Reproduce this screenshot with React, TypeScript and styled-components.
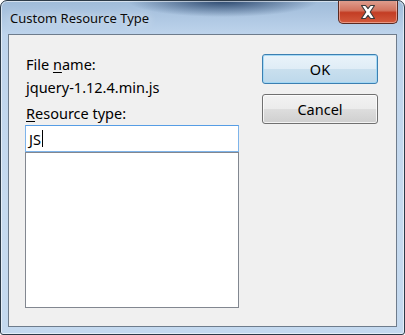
import React from 'react';
import styled, { createGlobalStyle } from 'styled-components';

const GlobalStyle = createGlobalStyle`
  html, body {
    margin: 0;
    padding: 0;
    background: #ffffff;
  }
  body {
    font-family: "Noto Sans", "Open Sans", sans-serif;
  }
`;

const App = () => {
  return (
    <>
      <GlobalStyle />
      <Window>
        <TitleBar>
          <Title>Custom Resource Type</Title>
          <CloseButton aria-label="Close">
            <svg width="16" height="16" viewBox="0 0 16 16">
              <path
                d="M1.5 1.5 H5.5 L8 4.6 L10.5 1.5 H14.5 L10.2 8 L14.5 14.5 H10.5 L8 11.4 L5.5 14.5 H1.5 L5.8 8 Z"
                fill="#ffffff"
                stroke="#3a3a3a"
                strokeWidth="1.1"
                strokeLinejoin="round"
              />
            </svg>
          </CloseButton>
        </TitleBar>
        <FrameBody>
          <Client>
            <Fields>
              <Label>File <Key>n</Key>ame:</Label>
              <Value>jquery-1.12.4.min.js</Value>
              <Label $spaced><Key>R</Key>esource type:</Label>
              <TextInput>
                JS<Caret />
              </TextInput>
              <ListBox />
            </Fields>
            <Buttons>
              <Button $default>OK</Button>
              <Button>Cancel</Button>
            </Buttons>
          </Client>
        </FrameBody>
      </Window>
    </>
  );
};

const Window = styled.div`
  width: 405px;
  height: 335px;
  box-sizing: border-box;
  border: 1px solid #2c3a48;
  border-radius: 7px 7px 3px 3px;
  display: flex;
  flex-direction: column;
  overflow: hidden;
  background:
    radial-gradient(ellipse 95px 16px at 222px 0px, rgba(38, 66, 104, 0.95), rgba(38, 66, 104, 0) 100%),
    linear-gradient(180deg, #9fbbd9 0%, #bed4ec 10%, #c6daef 60%, #c4d9ef 100%);
  box-shadow: inset 0 0 0 1px rgba(255, 255, 255, 0.55);
`;

const TitleBar = styled.div`
  height: 33px;
  display: flex;
  align-items: flex-start;
  justify-content: space-between;
  padding-left: 9px;
`;

const Title = styled.div`
  font-size: 13px;
  color: #0b0b0b;
  margin-top: 8px;
  text-shadow: 0 0 8px rgba(255, 255, 255, 0.9);
`;

const CloseButton = styled.div`
  width: 60px;
  height: 24px;
  margin-right: 6px;
  margin-top: -1px;
  box-sizing: border-box;
  border: 1px solid #5a2a22;
  border-top: none;
  border-radius: 0 0 5px 5px;
  background: linear-gradient(180deg, #dfa192 0%, #d2745f 45%, #c33d24 55%, #d35a3d 100%);
  box-shadow: inset 0 0 0 1px rgba(255, 215, 205, 0.5);
  display: flex;
  align-items: center;
  justify-content: center;
`;

const FrameBody = styled.div`
  flex: 1;
  display: flex;
  padding: 0 7px 7px 7px;
`;

const Client = styled.div`
  flex: 1;
  display: flex;
  justify-content: space-between;
  background: #f0f0f0;
  border: 1px solid #6e7c8c;
  padding: 19px 18px 18px 16px;
`;

const Fields = styled.div`
  width: 214px;
  display: flex;
  flex-direction: column;
`;

const Key = styled.span`
  text-decoration: underline;
  text-underline-offset: 2px;
`;

const Label = styled.div<{ $spaced?: boolean }>`
  font-size: 14.5px;
  line-height: 20px;
  color: #000000;
  padding-left: 1px;
  margin-top: ${(p) => (p.$spaced ? '6px' : '0')};
`;

const Value = styled.div`
  font-size: 14.5px;
  line-height: 20px;
  color: #000000;
  padding-left: 1px;
  margin-top: 3px;
`;

const TextInput = styled.div`
  height: 27px;
  box-sizing: border-box;
  margin-top: 2px;
  border: 1px solid #7eb4ea;
  border-top-color: #569de5;
  background: #ffffff;
  font-size: 14.5px;
  line-height: 24px;
  padding-left: 3px;
  display: flex;
  align-items: center;
`;

const Caret = styled.span`
  display: inline-block;
  width: 1px;
  height: 17px;
  background: #000000;
  margin-left: 1px;
`;

const ListBox = styled.div`
  flex: 1;
  border: 1px solid #828790;
  background: #ffffff;
`;

const Buttons = styled.div`
  width: 116px;
  display: flex;
  flex-direction: column;
  gap: 10px;
`;

const Button = styled.div<{ $default?: boolean }>`
  height: 30px;
  box-sizing: border-box;
  border: 1px solid ${(p) => (p.$default ? '#3c7fb1' : '#707070')};
  border-radius: 3px;
  background: ${(p) =>
    p.$default
      ? 'linear-gradient(180deg, #eaf3fa 0%, #dfecf6 50%, #c9dfee 51%, #bdd8eb 100%)'
      : 'linear-gradient(180deg, #f2f2f2 0%, #ebebeb 50%, #dddddd 51%, #cfcfcf 100%)'};
  box-shadow: inset 0 0 0 1px ${(p) => (p.$default ? 'rgba(160, 215, 245, 0.9)' : 'rgba(255, 255, 255, 0.75)')};
  font-size: 14.5px;
  color: #000000;
  display: flex;
  align-items: center;
  justify-content: center;
`;

export default App;
